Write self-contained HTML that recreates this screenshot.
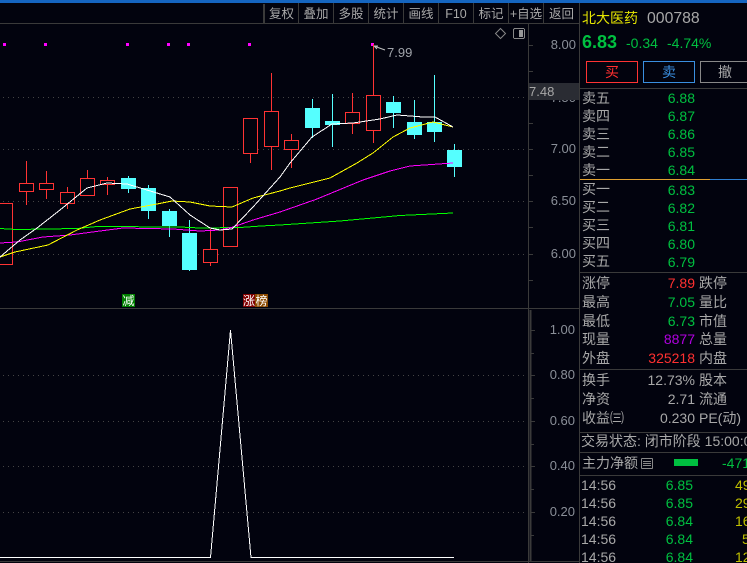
<!DOCTYPE html>
<html><head><meta charset="utf-8">
<style>
html,body{margin:0;padding:0;background:#02030e;width:747px;height:563px;overflow:hidden}
svg{display:block}
text{font-family:"Liberation Sans","Noto Sans CJK SC",sans-serif;font-size:14px;fill:#a8a8a8}
.c{font-size:14px}
.g{fill:#00c040}.r{fill:#ff3030}.y{fill:#c0c000}
.a{font-size:13px;fill:#8a8f98}
.e{text-anchor:end}.m{text-anchor:middle}
.t{font-size:12.5px;text-anchor:middle;fill:#a8a8a8}
.red{fill:#02030e;stroke:#f33;stroke-width:1}
.cy{fill:#55ffff}
.gr{stroke:#444;stroke-width:1;stroke-dasharray:1 4;fill:none}
.ln{stroke:#3a3a3a;stroke-width:1;fill:none}
.ma{fill:none;stroke-width:1;shape-rendering:crispEdges}
</style></head><body>
<svg width="747" height="563" viewBox="0 0 747 563" xmlns="http://www.w3.org/2000/svg">
<rect width="747" height="563" fill="#02030e"/>
<rect width="747" height="3" fill="#1565c0"/>

<g shape-rendering="crispEdges">
<path class="ln" d="M0 23.500H579M0 308.500H579M528.500 23V563M579.500 3V563M0 561.500H579"/>
<path d="M264 4v19" stroke="#3a3a3a" stroke-width="2"/>
<path class="ln" d="M298.500 3V23M333.500 3V23M368.500 3V23M403.500 3V23M438.500 3V23M473.500 3V23M508.500 3V23M543.500 3V23"/>
<path class="gr" d="M3 97.500H527M3 149.500H527M3 201.500H527M3 254.500H527M3 375.500H527M3 421.500H527M3 466.500H527M3 512.500H527"/>
<path class="ln" d="M528 45.500h5M528 71.500h5M528 97.500h5M528 123.500h5M528 149.500h5M528 175.500h5M528 201.500h5M528 227.500h5M528 254.500h5M528 280.500h5"/>
<path d="M530.500 310V561" stroke="#3a3a3a" stroke-width="2"/>
<path class="ln" d="M531 330.500h4M531 353.500h3M531 375.500h4M531 398.500h3M531 421.500h4M531 444.500h3M531 466.500h4M531 489.500h3M531 512.500h4M531 535.500h3"/>
</g>
<text class="a e" x="576" y="102">7.50</text>
<rect x="529" y="83" width="50" height="17" fill="#2a2c33" shape-rendering="crispEdges"/>

<g fill="#ff00ff" shape-rendering="crispEdges">
<rect x="3" y="43" width="3" height="3"/><rect x="44" y="43" width="3" height="3"/><rect x="126" y="43" width="3" height="3"/><rect x="167" y="43" width="3" height="3"/><rect x="187" y="43" width="3" height="3"/><rect x="248" y="43" width="3" height="3"/><rect x="371" y="43" width="3" height="3"/>
</g>

<!-- wicks -->
<g stroke-width="1" fill="none" shape-rendering="crispEdges">
<path stroke="#f33" d="M26.500 161V205M46.500 171V199M67.500 187V209M87.500 170V196M107.500 177V195M210.500 229V266M250.500 153V163M271.500 73V170M291.500 134V168M352.500 93V134M373.500 44V143"/>
<path stroke="#55ffff" d="M128.500 176V193M148.500 185V219M169.500 209V237M189.500 220V271M312.500 99V138M332.500 94V147M393.500 96V128M414.500 100V139M434.500 75V142M454.500 144V177"/>
</g>
<!-- bodies -->
<g shape-rendering="crispEdges">
<rect class="red" x="-3.500" y="203.500" width="16" height="61"/>
<rect class="red" x="19.500" y="183.500" width="14" height="8"/>
<rect class="red" x="39.500" y="183.500" width="14" height="6"/>
<rect class="red" x="60.500" y="192.500" width="14" height="11"/>
<rect class="red" x="80.500" y="178.500" width="14" height="17"/>
<rect class="red" x="100.500" y="180.500" width="14" height="4"/>
<rect class="red" x="203.500" y="249.500" width="14" height="13"/>
<rect class="red" x="223.500" y="187.500" width="14" height="59"/>
<rect class="red" x="243.500" y="118.500" width="14" height="35"/>
<rect class="red" x="264.500" y="111.500" width="14" height="35"/>
<rect class="red" x="284.500" y="140.500" width="14" height="9"/>
<rect class="red" x="345.500" y="112.500" width="14" height="11"/>
<rect class="red" x="366.500" y="95.500" width="14" height="35"/>
<rect class="cy" x="121" y="178" width="15" height="11"/>
<rect class="cy" x="141" y="188" width="15" height="23"/>
<rect class="cy" x="162" y="211" width="15" height="15"/>
<rect class="cy" x="182" y="233" width="15" height="37"/>
<rect class="cy" x="305" y="108" width="15" height="20"/>
<rect class="cy" x="325" y="121" width="15" height="4"/>
<rect class="cy" x="386" y="102" width="15" height="11"/>
<rect class="cy" x="407" y="122" width="15" height="13"/>
<rect class="cy" x="427" y="122" width="15" height="10"/>
<rect class="cy" x="447" y="150" width="15" height="17"/>
</g>

<!-- moving averages -->
<polyline class="ma" stroke="#00ff00" points="0,228.500 16,229.500 77,228.500 97,226.500 180,227 200,228 240,227.500 261,226 280,225 340,221 400,215.500 453,213"/>
<polyline class="ma" stroke="#ff00ff" points="0,243 17,242 43,237 70,235 100,231 123,228 173,229 200,231 220,230 233,227 253,220 280,212 317,199 363,180 390,171 410,166 453,163"/>
<polyline class="ma" stroke="#ffff00" points="0,257 15,252 48,245 77,230 100,220 130,209 157,204 172,201 190,202 210,206 232,207 253,198 280,191 290,188 330,178 357,163 373,153 393,137 410,128 433,122 453,127"/>
<polyline class="ma" stroke="#ffffff" points="0,257 20,240 37,228 60,210 87,188 107,183 127,184 147,190 170,197 190,215 210,228 220,230 232,229 253,207 280,177 290,163 312,137 332,124 353,123 380,119 397,115 423,117 435,117 453,127"/>

<!-- high marker -->
<path d="M385 50L374 46M374 46l4 0M374 46l3 3" stroke="#c0c0c0" fill="none"/>
<text x="387" y="57" class="a" style="fill:#a0a4aa">7.99</text>

<!-- top-right icons -->
<path d="M500.500 28.500l5 5-5 5-5-5z" fill="none" stroke="#888"/>
<rect x="513.500" y="28.500" width="11" height="10" rx="1.500" fill="none" stroke="#888" shape-rendering="crispEdges"/>
<rect x="519" y="30" width="4" height="7" fill="#999" shape-rendering="crispEdges"/>

<!-- tags -->
<g shape-rendering="crispEdges">
<rect x="122" y="294" width="13" height="13" fill="#008000"/>
<rect x="243" y="294" width="12" height="13" fill="#800000"/>
<rect x="255" y="294" width="13" height="13" fill="#8b4a00"/>
</g>
<g>
<text x="122.500" y="305" style="font-size:12px;fill:#fff">减</text>
<text x="243" y="305" style="font-size:12px;fill:#fff">涨</text>
<text x="255.500" y="305" style="font-size:12px;fill:#fff">榜</text>
</g>

<!-- indicator -->
<polyline fill="none" stroke="#fff" stroke-width="1" shape-rendering="crispEdges" points="0,557.500 210.500,557.500 230.500,330 251,557.500 454,557.500"/>

<!-- toolbar -->
<text class="t" x="281.500" y="18">复权</text><text class="t" x="316" y="18">叠加</text><text class="t" x="351" y="18">多股</text><text class="t" x="386" y="18">统计</text><text class="t" x="421" y="18">画线</text><text class="t" x="456" y="18">F10</text><text class="t" x="491" y="18">标记</text><text class="t" x="526" y="18">+自选</text><text class="t" x="561.500" y="18">返回</text>

<!-- axis -->
<text class="a e" x="576" y="49">8.00</text>
<text class="a" x="529" y="96" style="fill:#a8a8a8">7.48</text>
<text class="a e" x="576" y="153">7.00</text>
<text class="a e" x="576" y="205">6.50</text>
<text class="a e" x="576" y="258">6.00</text>
<text class="a e" x="575" y="334">1.00</text>
<text class="a e" x="575" y="379">0.80</text>
<text class="a e" x="575" y="425">0.60</text>
<text class="a e" x="575" y="470">0.40</text>
<text class="a e" x="575" y="516">0.20</text>

<!-- right panel header -->
<text x="582" y="23" style="fill:#e6e600">北大医药</text>
<text x="647" y="23" style="font-size:15.800px">000788</text>
<text x="582" y="48" class="g" style="font-size:18px;font-weight:bold">6.83</text>
<text x="626" y="48" class="g">-0.34</text>
<text x="667" y="48" class="g">-4.74%</text>

<g fill="none" shape-rendering="crispEdges">
<rect x="586.500" y="61.500" width="51" height="21" stroke="#f33"/>
<rect x="643.500" y="61.500" width="51" height="21" stroke="#3a8fe0"/>
<rect x="700.500" y="61.500" width="50" height="21" stroke="#888"/>
<path class="ln" d="M580 88.500H747M580 272.500H747M580 369.500H747M580 432.500H747M580 452.500H747M580 475.500H747"/>
<path d="M580 179.500H710" stroke="#e0a030"/><path d="M710 179.500H747" stroke="#2f7fd0"/>
<rect x="641.500" y="458.500" width="11" height="10" rx="1" stroke="#888"/>
<path d="M643 461.500h8M643 463.500h8M643 465.500h8" stroke="#888"/>
<rect x="674" y="459" width="24" height="7" fill="#00c040"/>
</g>
<text class="r m" x="612" y="77">买</text>
<text class="m" x="669" y="77" style="fill:#3a8fe0">卖</text>
<text class="m" x="725" y="77">撤</text>

<!-- order book -->
<text class="c" x="582" y="103">卖五</text><text class="g e" x="695" y="103">6.88</text>
<text class="c" x="582" y="121">卖四</text><text class="g e" x="695" y="121">6.87</text>
<text class="c" x="582" y="139">卖三</text><text class="g e" x="695" y="139">6.86</text>
<text class="c" x="582" y="157">卖二</text><text class="g e" x="695" y="157">6.85</text>
<text class="c" x="582" y="175">卖一</text><text class="g e" x="695" y="175">6.84</text>
<text class="c" x="582" y="194">买一</text><text class="g e" x="695" y="195">6.83</text>
<text class="c" x="582" y="212">买二</text><text class="g e" x="695" y="213">6.82</text>
<text class="c" x="582" y="230">买三</text><text class="g e" x="695" y="231">6.81</text>
<text class="c" x="582" y="248">买四</text><text class="g e" x="695" y="249">6.80</text>
<text class="c" x="582" y="266">买五</text><text class="g e" x="695" y="267">6.79</text>

<!-- stats -->
<text class="c" x="582" y="288">涨停</text><text class="r e" x="695" y="288">7.89</text><text class="c" x="699" y="288">跌停</text>
<text class="c" x="582" y="307">最高</text><text class="g e" x="695" y="307">7.05</text><text class="c" x="699" y="307">量比</text>
<text class="c" x="582" y="326">最低</text><text class="g e" x="695" y="326">6.73</text><text class="c" x="699" y="326">市值</text>
<text class="c" x="582" y="344">现量</text><text class="e" x="695" y="344" style="fill:#b000e0">8877</text><text class="c" x="699" y="344">总量</text>
<text class="c" x="582" y="363">外盘</text><text class="r e" x="695" y="363">325218</text><text class="c" x="699" y="363">内盘</text>

<text class="c" x="582" y="385">换手</text><text class="e" x="695" y="385">12.73%</text><text class="c" x="699" y="385">股本</text>
<text class="c" x="582" y="404">净资</text><text class="e" x="695" y="404">2.71</text><text class="c" x="699" y="404">流通</text>
<text class="c" x="582" y="423">收益㈢</text><text class="e" x="695" y="423">0.230</text><text class="c" x="699" y="423">PE(动)</text>

<text class="c" x="581" y="446">交易状态: 闭市阶段 15:00:0</text>
<text class="c" x="582" y="468">主力净额</text>
<text class="g" x="722" y="468">-471</text>

<!-- ticks -->
<text x="581" y="490">14:56</text><text class="g e" x="693" y="490">6.85</text><text class="y" x="735" y="490">49</text>
<text x="581" y="508">14:56</text><text class="g e" x="693" y="508">6.85</text><text class="y" x="735" y="508">29</text>
<text x="581" y="526">14:56</text><text class="g e" x="693" y="526">6.84</text><text class="y" x="735" y="526">16</text>
<text x="581" y="544">14:56</text><text class="g e" x="693" y="544">6.84</text><text class="y" x="742" y="544">5</text>
<text x="581" y="562">14:56</text><text class="g e" x="693" y="562">6.84</text><text class="y" x="735" y="562">12</text>
</svg>
</body></html>
